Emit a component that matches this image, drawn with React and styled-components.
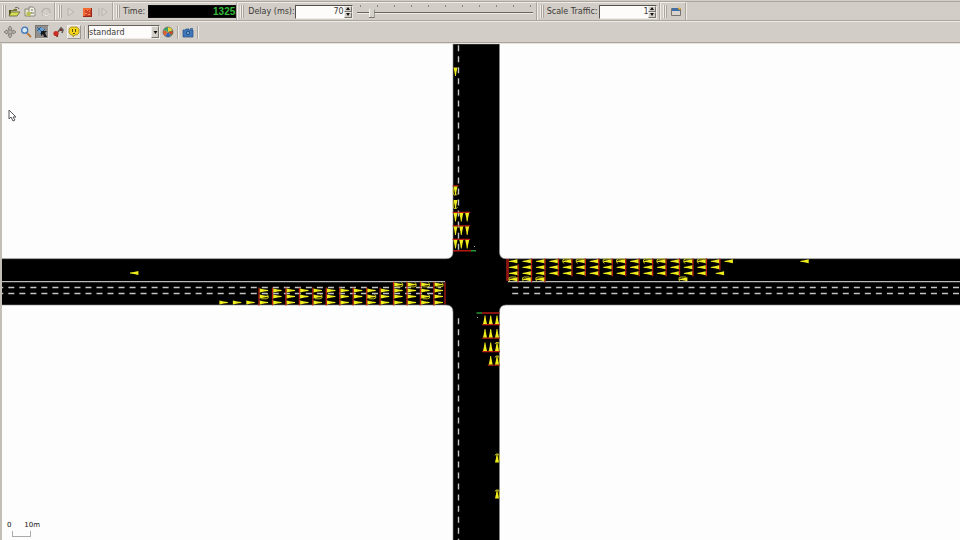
import React, { useState } from "react";
import styled, { createGlobalStyle, css } from "styled-components";

const face = "#d2cdc6";
const light = "#efece7";
const shade = "#aaa59e";

const GlobalStyle = createGlobalStyle`
  * { box-sizing: border-box; }
  body { margin: 0; background: ${face}; font: 8px "DejaVu Sans", sans-serif; color: #3c3a38; }
`;

const Window = styled.div`
  display: flex;
  flex-direction: column;
  height: 100vh;
  overflow: hidden;
`;

const Toolbar = styled.div`
  display: flex;
  align-items: stretch;
  flex: none;
  height: ${(p) => p.$height}px;
  border-bottom: 1px solid ${shade};
`;

const TopEdge = styled.div`
  flex: none;
  height: 2px;
  border-bottom: 1px solid ${shade};
`;

const Group = styled.div`
  display: flex;
  align-items: center;
  height: 18px;
  padding: 0 ${(p) => p.$end || 0}px 0 2px;
  border-top: 1px solid ${light};
  border-right: 1px solid ${shade};
  box-shadow: 1px 0 0 ${light};
  margin-right: 1px;
`;

const Grip = styled.span`
  width: 4px;
  height: 13px;
  margin-right: ${(p) => p.$gap}px;
  border-left: 1px solid ${light};
  border-right: 1px solid ${shade};
  background: linear-gradient(90deg, ${shade} 0 1px, ${light} 1px 2px);
`;

const IconButton = styled.button`
  display: grid;
  place-items: center;
  width: 14px;
  height: 14px;
  margin: 0 1px;
  padding: 0;
  border: 1px solid transparent;
  background: none;
  ${(p) => p.$look === "pressed" && css`
    background: #918e8b;
    border-color: #77736f #dedad5 #dedad5 #77736f;
  `}
  ${(p) => p.$look === "raised" && css`
    background: #e4e0d7;
    border-color: #f5f2ec #9b9690 #9b9690 #f5f2ec;
  `}
`;

const Icon = styled.svg`
  display: block;
  width: 12px;
  height: 12px;
`;

const Label = styled.label`
  margin-right: ${(p) => p.$gap}px;
  line-height: 10px;
  white-space: nowrap;
`;

const Led = styled.output`
  width: 88px;
  height: 13px;
  border: 1px solid #111;
  background: #000;
  color: #36b83c;
  text-align: right;
  font: bold 10px/11px "Liberation Sans", sans-serif;
`;

const SpinFrame = styled.span`
  display: flex;
  width: 58px;
  height: 14px;
  border: 1px solid;
  border-color: #55524f ${light} ${light} #55524f;
  background: #fdfcfb;
`;

const SpinInput = styled.input`
  flex: 1;
  min-width: 0;
  padding: 0;
  border: 0;
  outline: 0;
  background: transparent;
  text-align: right;
  font: inherit;
  color: #3c3a38;
`;

const SpinButtons = styled.span`
  display: grid;
  grid-template-rows: 1fr 1fr;
  width: 8px;
`;

const SpinButton = styled.button`
  display: grid;
  place-items: center;
  padding: 0;
  border: 1px solid;
  border-color: #f0ece7 #77736f #77736f #f0ece7;
  background: ${face};
`;

const Arrow = styled.svg`
  display: block;
  width: ${(p) => p.$size}px;
  height: 3px;
  fill: #111;
`;

const SliderBox = styled.span`
  display: flex;
  flex-direction: column;
  width: 176px;
  margin-left: 4px;
`;

const Ticks = styled.span`
  display: flex;
  justify-content: space-between;
  height: 2px;
  margin: 0 2px 0 3px;
`;

const Tick = styled.i`
  width: 1px;
  height: 2px;
  background: #8b8782;
`;

const Slider = styled.input`
  appearance: none;
  width: 100%;
  height: 12px;
  margin: 0;
  background: linear-gradient(#67645f, #67645f) 0 5px / 100% 1px no-repeat,
    linear-gradient(${light}, ${light}) 0 6px / 100% 1px no-repeat;
  &::-webkit-slider-thumb {
    appearance: none;
    width: 6px;
    height: 11px;
    background: linear-gradient(90deg, #f4f1ec 0 1px, #d4d0ca 1px 5px, #77736f 5px);
    border-bottom: 1px solid #77736f;
    clip-path: polygon(50% 0, 100% 25%, 100% 100%, 0 100%, 0 25%);
  }
`;

const Divider = styled.span`
  align-self: center;
  width: 2px;
  height: 13px;
  margin: 0 ${(p) => p.$gap}px;
  border-left: 1px solid ${shade};
  border-right: 1px solid ${light};
`;

const ViewTools = styled.div`
  display: flex;
  align-items: center;
  padding-left: 2px;
  border-top: 1px solid ${light};
  flex: 1;
`;

const ComboFrame = styled.span`
  position: relative;
  display: flex;
  width: 72px;
  height: 14px;
  border: 1px solid;
  border-color: #66625e ${light} ${light} #66625e;
  background: #fdfcfb;
`;

const Combo = styled.select`
  appearance: none;
  width: 100%;
  padding: 0 10px 0 0;
  border: 0;
  outline: 0;
  background: transparent;
  font: inherit;
  color: #3c3a38;
`;

const ComboArrow = styled.span`
  position: absolute;
  inset: 0 0 0 auto;
  display: grid;
  place-items: center;
  width: 8px;
  border: 1px solid;
  border-color: #f0ece7 #77736f #77736f #f0ece7;
  background: ${face};
  pointer-events: none;
`;

const View = styled.main`
  position: relative;
  flex: 1;
  min-height: 0;
  border-left: 2px solid #c3beb6;
  border-top: 1px solid #e6e2dc;
  background: #fefdfe;
`;

const Network = styled.svg`
  display: block;
  width: 100%;
  height: 100%;
`;

const Scale = styled.div`
  position: absolute;
  left: 5px;
  bottom: 3px;
  width: 33px;
`;

const ScaleText = styled.div`
  display: flex;
  justify-content: space-between;
  font-size: 7px;
  line-height: 8px;
  color: #111;
`;

const ScaleBar = styled.div`
  width: 19px;
  height: 6px;
  margin: 2px 0 0 5px;
  border: 1px solid #aaa;
  border-top: 0;
`;

const Pointer = styled.svg`
  position: absolute;
  left: 6px;
  top: 65px;
  width: 9px;
  height: 13px;
`;

const icons = {
  open: <><path d="M1 4h4l1-1h3v2H1z" fill="#76792e" /><path d="M1 10V4h2v3z" fill="#50521a" /><path d="M1 10l2-4h9l-3 4z" fill="#d5dc56" stroke="#4e511e" strokeWidth=".7" /><path d="M7 2c2-1 3-1 4 1" fill="none" stroke="#444" strokeWidth=".8" /></>,
  openConfig: <><path d="M1 3h5v7H1z" fill="#e7e5d0" stroke="#77765d" strokeWidth=".8" /><path d="M5 1h4l2 2v7H5z" fill="#f1f0e5" stroke="#77756a" strokeWidth=".8" /><path d="M3 6h5l-2 4H2z" fill="#bac05a" /><path d="M7 4h2M7 7h3" stroke="#555" strokeWidth=".8" /></>,
  reload: <><path d="M2 7a4 4 0 0 1 6-4l2 1M10 5a4 4 0 0 1-6 4L2 8" fill="none" stroke="#b8b3ac" strokeWidth="1.4" /><path d="M3 8a4 4 0 0 0 7-1" fill="none" stroke="#f0ede8" /></>,
  play: <path d="M3 2l6 4-6 4z" fill="#d8d3cc" stroke="#b9b4ad" />,
  stop: <><path d="M2 2h9v9H2z" fill="#d5402c" /><path d="M2 2h8v2H4v6H2z" fill="#f06a32" /><path d="M6 4h1v1H6zM8 5h1v1H8zM4 7h2v1H4zM7 8h2v1H7z" fill="#f4a04a" /><path d="M10 2h1v9H2v-1h8z" fill="#97281e" /></>,
  step: <path d="M2 2v8M5 2l5 4-5 4z" fill="#d8d3cc" stroke="#b9b4ad" />,
  window: <><path d="M1.5 2.5h9v7h-9z" fill="#d8d3cc" stroke="#77736f" /><path d="M2 2h8v3H2z" fill="#416ea5" /><path d="M9 1l1 1 1 0-1 2-2-1z" fill="#f0b72a" /></>,
  move: <path d="M6 0l2 3H7v2h2V4l3 2-3 2V7H7v2h1l-2 3-2-3h1V7H3v1L0 6l3-2v1h2V3H4z" fill="#b9b5af" stroke="#69655f" strokeWidth=".7" />,
  zoom: <><path d="M7 7l4 4" stroke="#b87837" strokeWidth="1.8" /><circle cx="4.7" cy="4.2" r="3" fill="#d7e9f8" stroke="#3f76b6" strokeWidth="1.3" /></>,
  magnify: <><path d="M1 3l3-2 3 1 2 3-2 3-4-1z" fill="#6da0d0" /><path d="M1 1l7 7M1 5l4-4M4 8l5-5" stroke="#28598c" strokeWidth=".9" /><path d="M5 5l6 0-2 2 2 4H8L7 8 5 10z" fill="#16181a" /></>,
  locate: <><path d="M6 6l3-4 2 2-1 3" fill="none" stroke="#5a5552" strokeWidth="1.5" /><circle cx="4" cy="7.5" r="2.6" fill="#c72e24" /><path d="M8 3h2v2H8zM5 9h1v2H4z" fill="#82342e" /></>,
  tip: <><path d="M3 1h6l2 2v4L9 9H7l-2 2V9H3L1 7V3z" fill="#f2d41c" stroke="#a38917" strokeWidth=".8" /><path d="M4 3h1v3H4zM7 3h1v3H7zM5 7h2v1H5z" fill="#5b5310" /></>,
  wheel: <><path d="M6 6V1a5 5 0 0 1 4.5 3z" fill="#ead629" /><path d="M6 6l4.5-2A5 5 0 0 1 9 10z" fill="#43a64d" /><path d="M6 6l3 4a5 5 0 0 1-6 0z" fill="#3265bf" /><path d="M6 6l-3 4a5 5 0 0 1-1.5-6z" fill="#e0622e" /><path d="M6 6L1.5 4A5 5 0 0 1 6 1z" fill="#3f9f6c" /><path d="M6 6l5-1-1 4z" fill="#d93d2c" /><circle cx="6" cy="6" r="5" fill="none" stroke="#635d50" strokeWidth=".6" /></>,
  camera: <><path d="M1 4h2l1-1h3v1h4v7H1z" fill="#3c78ba" stroke="#284e7e" strokeWidth=".7" /><path d="M8 2h3v2H8z" fill="#4a77a7" /><circle cx="6" cy="7" r="1.6" fill="#7fabd9" stroke="#244d7e" /></>,
};

function Tool({ icon, name, ...rest }) {
  return (
    <IconButton type="button" aria-label={name} {...rest}>
      <Icon viewBox="0 0 12 12" aria-hidden="true">{icons[icon]}</Icon>
    </IconButton>
  );
}

function Spin({ id, value, onChange }) {
  return (
    <SpinFrame>
      <SpinInput id={id} value={value} onChange={(e) => onChange(Number(e.target.value) || 0)} />
      <SpinButtons>
        <SpinButton type="button" aria-label="Increase" onClick={() => onChange(value + 1)}>
          <Arrow $size={4} viewBox="0 0 4 3"><path d="M0 3l2-3 2 3z" /></Arrow>
        </SpinButton>
        <SpinButton type="button" aria-label="Decrease" onClick={() => onChange(value - 1)}>
          <Arrow $size={4} viewBox="0 0 4 3"><path d="M0 0l2 3 2-3z" /></Arrow>
        </SpinButton>
      </SpinButtons>
    </SpinFrame>
  );
}

const series = (count, start, step) => Array.from({ length: count }, (_, i) => start + i * step);
const GAP = 13.45;

// Vehicles: nose position, heading in degrees (0 = west), long bodies and braking lights.
const vehicles = [
  ...series(16, 509, GAP).map((x, i) => ({ x, y: 261.3, a: 0, long: i > 3 && i % 3 !== 0, brake: i > 0 })),
  ...series(16, 509, GAP).map((x) => ({ x, y: 267.3, a: 0, brake: true })),
  ...series(15, 509, GAP).map((x) => ({ x, y: 273.3, a: 0, brake: true })),
  ...series(3, 509, GAP).map((x) => ({ x, y: 279.3, a: 0, long: true, brake: true })),
  { x: 724.5, y: 261.3, a: 0 },
  { x: 800.3, y: 261.3, a: 0 },
  { x: 715.7, y: 273.3, a: 0 },
  { x: 679, y: 279.3, a: 0, long: true },
  { x: 130, y: 273, a: 0 },
  ...series(4, 443, -GAP).map((x) => ({ x, y: 284.6, a: 180, long: true, brake: true })),
  ...series(14, 443, -GAP).map((x) => ({ x, y: 290.5, a: 180, brake: true })),
  ...series(14, 443, -GAP).map((x, i) => ({ x, y: 296.5, a: 180, long: i % 4 === 1, brake: true })),
  ...series(17, 443, -GAP).map((x, i) => ({ x, y: 302.5, a: 180, brake: i < 14 })),
  ...[455.5, 461.3, 467.2].flatMap((x) => [221.5, 235, 248.5].map((y) => ({ x, y, a: 270, brake: true }))),
  { x: 455.5, y: 76, a: 270 },
  { x: 455.5, y: 195, a: 270, long: true, brake: true },
  { x: 455.5, y: 208.5, a: 270, long: true },
  ...[485, 490.7, 497].flatMap((x) => [315.5, 329, 342.5].map((y) => ({ x, y, a: 90, brake: true, long: x > 495 && y > 340 }))),
  { x: 490.7, y: 356, a: 90, brake: true },
  { x: 497, y: 356, a: 90, brake: true, long: true },
  { x: 497, y: 454, a: 90, long: true },
  { x: 497, y: 490, a: 90, long: true },
];

function Vehicle({ x, y, a, long, brake }) {
  return (
    <g transform={`translate(${x} ${y}) rotate(${a})`}>
      {brake && <path d="M9.1-2.9v5.8" stroke="#c02214" strokeWidth="1.3" />}
      <path d="M0-.4L4-1 8.4-2V2L4 1 0 .4z" fill="#f0ec1c" />
      {long && <path d="M1.5 2L0 1V-1.5L2-2.3H7" fill="none" stroke="#d2ce22" strokeWidth=".9" />}
    </g>
  );
}

function Junction() {
  return (
    <Network viewBox="2 44 958 496" preserveAspectRatio="xMidYMid slice" role="img" aria-label="Traffic simulation of a crossroads">
      <path
        d="M453 44V252Q453 258.7 446 258.7H-900V305H446Q453 305 453 312V900H499.5V312Q499.5 305 506 305H1900V258.7H506Q499.5 258.7 499.5 252V44z"
        fill="#000" stroke="#8d8d8d" strokeWidth=".6"
      />
      <path d="M2 281.6H445M508 281.6H960" stroke="#b9b9b9" strokeWidth="1.2" />
      <g stroke="#c4c4c4" strokeWidth="1.4" strokeDasharray="6 5.02">
        <path d="M-2.7 287.5H441M-2.7 293.5H441M512.2 287.5H960M512.2 293.5H960" />
        <path d="M458.5 45.3V250M458.5 318.3V540" />
      </g>
      <path d="M453 250.8H471M482 313H499.5" stroke="#b51b14" strokeWidth="1.5" />
      <path d="M471 250.8H476M476.5 313H482" stroke="#279432" strokeWidth="1.5" />
      <path d="M445 282V304.5" stroke="#8e1610" strokeWidth="1.6" />
      <path d="M507.5 259V281" stroke="#8e1610" strokeWidth="2.8" />
      <path d="M474 246.5h1M477 317.5h1" stroke="#aaa" />
      {vehicles.map((v, i) => <Vehicle key={i} {...v} />)}
    </Network>
  );
}

export default function App() {
  const [delay, setDelay] = useState(70);
  const [traffic, setTraffic] = useState(1);
  return (
    <Window>
      <GlobalStyle />
      <TopEdge />
      <Toolbar $height={19}>
        <Group>
          <Grip $gap={0} />
          <Tool icon="open" name="Open network" />
          <Tool icon="openConfig" name="Open configuration" />
          <Tool icon="reload" name="Reload" disabled />
        </Group>
        <Group $end={1}>
          <Grip $gap={1} />
          <Tool icon="play" name="Run" disabled />
          <Tool icon="stop" name="Stop" />
          <Tool icon="step" name="Step" disabled />
        </Group>
        <Group>
          <Grip $gap={3} />
          <Label htmlFor="time" $gap={3}>Time:</Label>
          <Led id="time">1325</Led>
        </Group>
        <Group $end={3}>
          <Grip $gap={4} />
          <Label htmlFor="delay" $gap={0}>Delay (ms):</Label>
          <Spin id="delay" value={delay} onChange={setDelay} />
          <SliderBox>
            <Ticks>{series(11, 0, 1).map((n) => <Tick key={n} />)}</Ticks>
            <Slider type="range" min="0" max="1000" value={delay} aria-label="Delay" onChange={(e) => setDelay(Number(e.target.value))} />
          </SliderBox>
        </Group>
        <Group $end={2}>
          <Grip $gap={3} />
          <Label htmlFor="traffic" $gap={2}>Scale Traffic:</Label>
          <Spin id="traffic" value={traffic} onChange={setTraffic} />
        </Group>
        <Group $end={1}>
          <Grip $gap={1} />
          <Tool icon="window" name="New view" />
        </Group>
      </Toolbar>
      <Toolbar $height={22}>
        <ViewTools>
          <Tool icon="move" name="Recenter" />
          <Tool icon="zoom" name="Zoom" />
          <Tool icon="magnify" name="Zoom style" $look="pressed" />
          <Tool icon="locate" name="Locate object" />
          <Tool icon="tip" name="Show tooltips" $look="raised" />
          <Divider $gap={2} />
          <ComboFrame>
            <Combo aria-label="Colouring scheme" defaultValue="standard">
              <option>standard</option>
            </Combo>
            <ComboArrow><Arrow $size={5} viewBox="0 0 4 3"><path d="M0 0l2 3 2-3z" /></Arrow></ComboArrow>
          </ComboFrame>
          <Tool icon="wheel" name="Edit colouring" />
          <Divider $gap={1} />
          <Tool icon="camera" name="Snapshot" />
          <Divider $gap={1} />
        </ViewTools>
      </Toolbar>
      <View>
        <Junction />
        <Pointer viewBox="0 0 9 13" aria-hidden="true">
          <path d="M1 1v9l2-2 2 4 2-1-2-3h3z" fill="#fff" stroke="#55555a" />
        </Pointer>
        <Scale>
          <ScaleText><span>0</span><span>10m</span></ScaleText>
          <ScaleBar />
        </Scale>
      </View>
    </Window>
  );
}
